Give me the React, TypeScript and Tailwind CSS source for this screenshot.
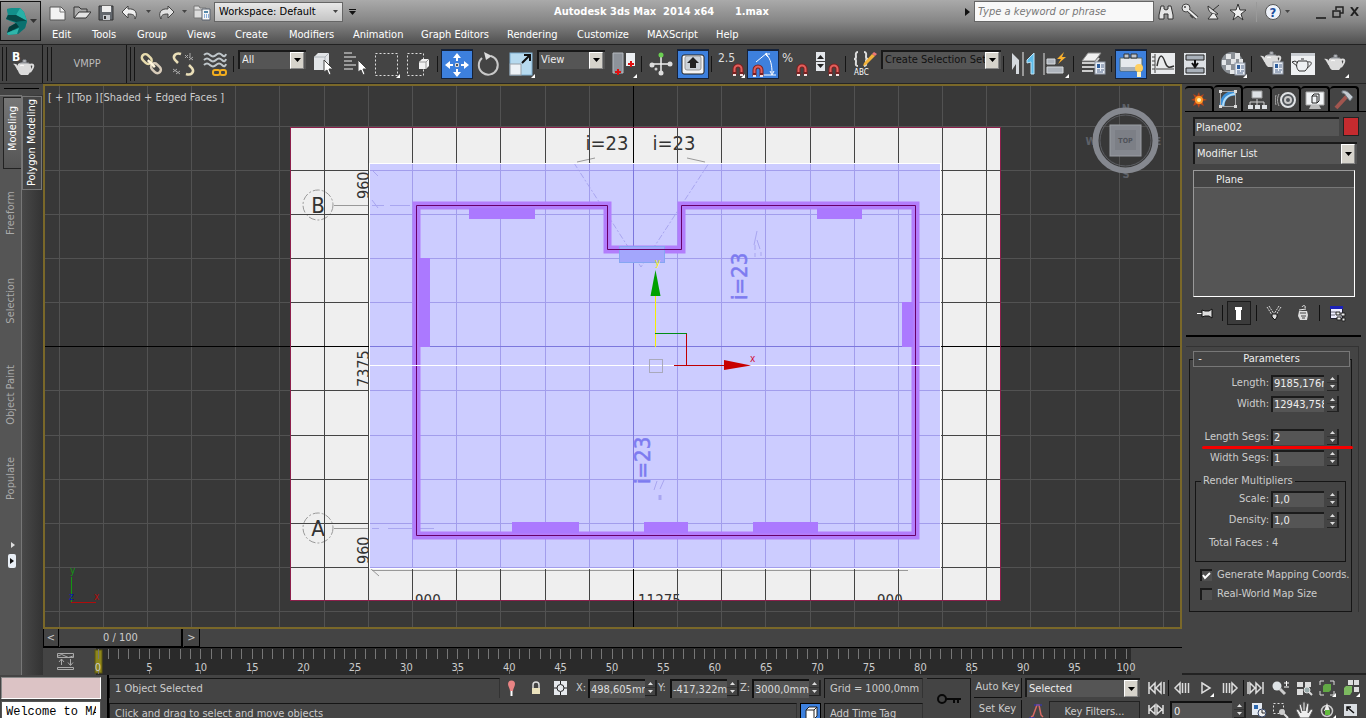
import { useState, type ReactNode } from "react";
import clsx from "clsx";

interface ChildrenProps {
  children?: ReactNode;
}

// ---------- shared bits ----------

const Icon = ({ size = 30, children }: ChildrenProps & { size?: number }) => (
  <svg width={size} height={size} viewBox={`0 0 ${size} ${size}`} fill="none" aria-hidden="true" className="shrink-0">
    {children}
  </svg>
);

const Flyout = () => <path d="M29 25v4h-4z" fill="#fff" />;

const Magnet = ({ x, y }: { x: number; y: number }) => (
  <g transform={`translate(${x} ${y})`}>
    <path d="M1.500 11V5a3.500 3.500 0 0 1 7 0v6" stroke="#7d2020" strokeWidth="4" />
    <path d="M1.500 8V5a3.500 3.500 0 0 1 7 0v3" stroke="#e2605c" strokeWidth="2" />
    <path d="M0 11h3M7 11h3" stroke="#f4e4e4" strokeWidth="2" />
  </g>
);

const Teapot = ({ x = 0, y = 0, color = "#dcdcdc" }: { x?: number; y?: number; color?: string }) => (
  <g transform={`translate(${x} ${y})`}>
    <path d="M5 5c3-2 9-2 12 0 2 4 1 8-2 11H8C5 14 4 10 5 5z" fill={color} />
    <path d="M6 12C3 11 3 6 0 5c2-1 4 0 6 3" fill={color} />
    <path d="M16 6c5-2 6 1 1 7" stroke={color} strokeWidth="2" />
    <path d="M10 1h3v2h-3zM7 4h9" fill={color} stroke="#8b8f96" />
    <path d="M7 7c1-1 3-1 4 0" stroke="#fff" />
  </g>
);

const SheetBadge = ({ x, y }: { x: number; y: number }) => (
  <g transform={`translate(${x} ${y})`}>
    <rect width="10" height="12" fill="#e9eef5" stroke="#8f98a6" />
    <rect x="2" y="2" width="3" height="4" fill="#2f5f9e" />
    <path d="M6 3h3M6 5h3M2 8h3M6 8h3M2 10h6" stroke="#54688a" />
  </g>
);

interface DropDownProps {
  label: string;
  value: string;
  className?: string;
  light?: boolean;
}

const DropDown = ({ label, value, className, light }: DropDownProps) => (
  <span className={clsx("relative inline-block h-[19px] shrink-0 border-t-2 border-l-2 border-[#191919] bg-[#555]", className)}>
    <select
      aria-label={label}
      className={clsx("block h-full w-full appearance-none overflow-hidden bg-transparent pr-4 pl-0.5 text-clip outline-none", light ? "text-[#eee]" : "text-[#111]")}
    >
      <option>{value}</option>
    </select>
    <span className="pointer-events-none absolute inset-y-0 right-0.5 flex w-3.5 items-center justify-center border border-white border-r-[#888] border-b-[#888] bg-[#d6d3cb]">
      <svg width="7" height="4" viewBox="0 0 7 4"><path d="M0 0h7L3.500 4z" fill="#000" /></svg>
    </span>
  </span>
);

const Spinner = ({ name }: { name: string }) => (
  <span className="flex h-4 w-3 shrink-0 flex-col border-r-2 border-b border-[#222]">
    <button aria-label={`${name} up`} className="flex flex-1 items-center justify-center">
      <svg width="5" height="3"><path d="M0 3h5L2.500 0z" fill="#ddd" /></svg>
    </button>
    <button aria-label={`${name} down`} className="flex flex-1 items-center justify-center border-t border-[#333]">
      <svg width="5" height="3"><path d="M0 0h5L2.500 3z" fill="#ddd" /></svg>
    </button>
  </span>
);

// ---------- title bar ----------

const menus = [
  { name: "Edit", width: "w-[40px]" },
  { name: "Tools", width: "w-[45px]" },
  { name: "Group", width: "w-[50px]" },
  { name: "Views", width: "w-[48px]" },
  { name: "Create", width: "w-[54px]" },
  { name: "Modifiers", width: "w-[64px]" },
  { name: "Animation", width: "w-[68px]" },
  { name: "Graph Editors", width: "w-[86px]" },
  { name: "Rendering", width: "w-[70px]" },
  { name: "Customize", width: "w-[70px]" },
  { name: "MAXScript", width: "w-[69px]" },
  { name: "Help", width: "w-[40px]" },
];

const Caret = () => (
  <svg width="5" height="3" className="shrink-0"><path d="M0 0h5L2.500 3z" fill="#444" /></svg>
);

const TitleButton = ({ label, children }: ChildrenProps & { label: string }) => (
  <button aria-label={label} className="flex w-6 shrink-0 items-center justify-center">
    <Icon size={18}>{children}</Icon>
  </button>
);

const Header = () => (
  <header className="flex h-[44px] shrink-0 bg-linear-to-b from-[#aaa] via-[#858585] to-[#505050]">
    <button aria-label="Application menu" className="mt-px flex h-10 w-[41px] shrink-0 items-center gap-0.5 border border-[#111] bg-linear-to-b from-[#999] to-[#666] pl-1">
      <svg width="23" height="29" viewBox="0 0 23 29">
        <path d="M2 2l6-1h7l4 4 3 9-2 7-7 6-10 1-1-2 2-6 7-4-6-2-4-2 2-5z" fill="#0d8583" />
        <path d="M2 2l6-1h7l-4 7-8 0z" fill="#128f8b" />
        <path d="M15 1l4 4 3 9-11-6z" fill="#27b0a7" />
        <path d="M1 12l2-4h8l11 6-11 1z" fill="#064847" />
        <path d="M11 15l11-1-2 7-7 6-5-5z" fill="#0a706f" />
        <path d="M4 20l7-4 3 4-12 6z" fill="#043c3b" />
        <path d="M2 26l12-5-2 6-9 1z" fill="#2fb5aa" />
      </svg>
      <svg width="7" height="4"><path d="M0 0h7L3.500 4z" fill="#333" /></svg>
    </button>
    <div className="flex min-w-0 flex-1 flex-col">
      <div className="flex h-[23px] items-center">
        <div className="flex items-center pl-[5px]">
          <TitleButton label="New">
            <path d="M1 4h11l4 4v9H1z" fill="#f2f2f2" stroke="#555" />
            <path d="M11 4v5h5" stroke="#777" />
          </TitleButton>
          <TitleButton label="Open">
            <path d="M1 15V4h5l2 2h6v3" fill="#aaa" stroke="#333" />
            <path d="M1 15l5-6h12l-5 6z" fill="#e4e4e4" stroke="#333" />
          </TitleButton>
          <TitleButton label="Save">
            <path d="M2 3h14v14H2z" fill="#62676d" stroke="#333" />
            <path d="M5 3h9v6H5z" fill="#eee" />
            <path d="M6 12h7v5H6z" fill="#c5c9ce" />
            <path d="M7 13h2v3H7z" fill="#333" />
          </TitleButton>
          <TitleButton label="Undo">
            <path d="M1 9l6-6v3c8-1 10 5 7 10 0-4-2-5-7-5v4z" fill="#f0f0f0" stroke="#444" />
          </TitleButton>
          <span className="flex w-3 justify-center"><Caret /></span>
          <TitleButton label="Redo">
            <path d="M17 9l-6-6v3C3 5 1 11 4 16c0-4 2-5 7-5v4z" fill="#e2e2e2" stroke="#444" />
          </TitleButton>
          <span className="flex w-3 justify-center"><Caret /></span>
          <TitleButton label="Project folder">
            <path d="M1 3h5l1 2h6v10H1z" fill="#ddd" stroke="#777" />
            <path d="M1 7h11" stroke="#888" />
            <path d="M9 6h8v11H9z" fill="#f6f6f6" stroke="#59616c" />
            <path d="M11 8h4v2h-4z" fill="#58a" />
            <path d="M11 12h1M13 12h1M15 12h1M11 14h1M13 14h1M15 14h1" stroke="#236ac0" />
          </TitleButton>
        </div>
        <span className="relative h-5 w-[129px] shrink-0 border border-[#666] bg-linear-to-b from-[#e8e8e8] to-[#c4c4c4]">
          <select aria-label="Workspace" className="block h-full w-full appearance-none bg-transparent pl-1 text-black outline-none">
            <option>Workspace: Default</option>
          </select>
          <span className="pointer-events-none absolute inset-y-0 right-1 flex items-center"><Caret /></span>
        </span>
        <button aria-label="Customize quick access" className="ml-1 px-0.5">
          <svg width="7" height="6"><path d="M0 0h7v1H0zM0 2h7L3.500 6z" fill="#111" /></svg>
        </button>
        <h1 className="flex-1 text-center font-[DejaVu_Sans_Condensed,Liberation_Sans,sans-serif] text-[11px] font-bold whitespace-pre text-white">
          {"Autodesk 3ds Max  2014 x64      1.max"}
        </h1>
        <svg width="5" height="8" className="mr-1"><path d="M0 0l5 4-5 4z" fill="#111" /></svg>
        <input
          aria-label="Search"
          placeholder="Type a keyword or phrase"
          className="h-[21px] w-[180px] shrink-0 border border-[#666] bg-[#f8f8f8] pl-[3px] italic outline-none placeholder:text-[#777]"
        />
        <TitleButton label="Search">
          <path d="M4 3h3v3l2 1 2-1V3h3l2 9v4h-5v-5H7v5H2v-4z" fill="#e6e6e6" stroke="#333" />
        </TitleButton>
        <TitleButton label="Subscription">
          <circle cx="5" cy="5" r="4" fill="#e6e6e6" stroke="#444" />
          <path d="M8 8l8 7M12 12l-2 2" stroke="#444" strokeWidth="4" />
          <path d="M7 7l9 8" stroke="#eee" strokeWidth="2" />
          <circle cx="4" cy="4" r="1" fill="#444" />
        </TitleButton>
        <TitleButton label="Exchange">
          <path d="M3 3c0 6 4 9 10 8z" fill="#ddd" stroke="#333" />
          <path d="M8 7l6-5M7 11l-4 5h10l-3-5" fill="#eee" stroke="#333" />
        </TitleButton>
        <TitleButton label="Favorites">
          <path d="M9 1l2 6h6l-5 4 2 6-5-4-5 4 2-6-5-4h6z" fill="#eee" stroke="#333" />
        </TitleButton>
        <span className="mr-1 ml-1.5 h-5 w-px bg-[#999]" />
        <TitleButton label="Help">
          <circle cx="9" cy="9" r="7.500" fill="#eef2fa" stroke="#555" />
          <text x="9" y="14" textAnchor="middle" fontSize="13" fontWeight="bold" fill="#1d4e9c">?</text>
        </TitleButton>
        <Caret />
        <button aria-label="Minimize" className="mt-3 ml-[26px] h-0.5 w-2.5 bg-[#333]" />
        <button aria-label="Restore" className="ml-1.5">
          <svg width="12" height="12" fill="none"><path d="M4 4V1h7v6H8M1 5h7v6H1z" stroke="#222" strokeWidth="1.500" /></svg>
        </button>
        <button aria-label="Close" className="mr-[7px] ml-1.5">
          <svg width="9" height="9"><path d="M1 0l7 9M8 0L1 9" stroke="#222" strokeWidth="2" /></svg>
        </button>
      </div>
      <nav className="flex h-[21px] items-center pb-px pl-[11px] text-white">
        {menus.map((menu) => (
          <button key={menu.name} className={clsx("mt-1 shrink-0 text-left whitespace-nowrap", menu.width)}>{menu.name}</button>
        ))}
      </nav>
    </div>
  </header>
);

// ---------- main toolbar ----------

const Tool = ({ label, active, children }: ChildrenProps & { label: string; active?: boolean }) => (
  <button
    aria-label={label}
    className={clsx(
      "flex h-[30px] w-8 shrink-0 items-center justify-center",
      active && "border border-t-2 border-[#16233a] bg-[#3d80dd]"
    )}
  >
    <Icon>{children}</Icon>
  </button>
);

const Separator = () => <span className="mr-[3px] ml-0.5 h-4 w-px shrink-0 bg-[#151515]" />;

const Grip = () => <span className="h-[34px] w-[5px] shrink-0 border-x border-[#151515]" />;

const Cursor = ({ x, y }: { x: number; y: number }) => (
  <path transform={`translate(${x} ${y})`} d="M0 0v12l3-2 2 5 2-1-2-5h4z" fill="#fff" stroke="#444" strokeWidth="1" />
);

const Toolbar = () => (
  <div className="flex h-10 shrink-0 items-center overflow-hidden border-t border-b border-t-[#222] border-b-[#262626] bg-[#444]">
    <div className="flex h-full w-[43px] shrink-0 items-center border-r border-[#151515] pl-0.5">
      <Grip />
      <Tool label="Batch render">
        <text x="4" y="12" fontSize="12" fontWeight="bold" fill="#fff">B</text>
        <Teapot x={5} y={10} />
      </Tool>
    </div>
    <div className="flex h-full w-[84px] shrink-0 items-center border-r border-[#151515] pl-1">
      <Grip />
      <button className="flex-1 pr-1 text-center text-[#bbb]">VMPP</button>
    </div>
    <div className="flex h-full w-2 shrink-0 items-center justify-end"><Grip /></div>
    <Tool label="Select and link">
      <g transform="rotate(45 15 15)">
        <rect x="3" y="11" width="11" height="7" rx="3.500" stroke="#e8dcae" strokeWidth="2.500" />
        <rect x="16" y="11" width="11" height="7" rx="3.500" stroke="#d8ccba" strokeWidth="2.500" />
        <path d="M10 14.500h10" stroke="#fff6dc" strokeWidth="2.500" />
      </g>
    </Tool>
    <Tool label="Unlink selection">
      <path d="M13 5c-5-2-9 2-6 6l3 3M18 25c5 2 9-2 6-6l-3-3" stroke="#eadfb8" strokeWidth="2.500" />
      <path d="M17 6l3 3m0-3l-3 3M21 8l4 3m0-3l-4 3M22 4v4M5 20l4 3m0-3l-4 3M8 22l4 3m0-3l-4 3" stroke="#aaa" />
    </Tool>
    <Tool label="Bind to space warp">
      <path d="M4 6q3-3 6 0t6 0 6 0 4-1M4 11q3-3 6 0t6 0 6 0 4-1M4 16q3-3 6 0t6 0 6 0 4-1" stroke="#bfc6ca" strokeWidth="2" />
      <rect x="13" y="21" width="7" height="5" rx="2" stroke="#f3ae1e" strokeWidth="2" />
      <rect x="20" y="21" width="6" height="5" rx="2" stroke="#f3ae1e" strokeWidth="2" />
    </Tool>
    <Separator />
    <DropDown label="Selection filter" value="All" className="mb-[10px] ml-px w-[68px]" light />
    <Tool label="Select object">
      <path d="M7 8l4-4h11v13l-4 4H7z" fill="#e2e5e8" />
      <path d="M7 8h11v13M18 8l4-4" stroke="#aeb4ba" />
      <Cursor x={17} y={11} />
    </Tool>
    <Tool label="Select by name">
      <path d="M5 4h8M5 8h12M5 12h8M5 16h12M5 20h9" stroke="#eee" strokeWidth="1" />
      <Cursor x={19} y={11} />
    </Tool>
    <Tool label="Rectangular region">
      <rect x="4.500" y="4.500" width="22" height="22" stroke="#ddd" strokeDasharray="2 2" />
      <Flyout />
    </Tool>
    <Tool label="Window crossing">
      <rect x="4.500" y="4.500" width="16" height="22" stroke="#ddd" strokeDasharray="2 2" />
      <path d="M16 13l3-3h7v7l-3 3h-7z" fill="#f2f2f2" />
      <path d="M16 13h7v7M23 13l3-3" stroke="#999" />
    </Tool>
    <span className="w-px shrink-0" />
    <Separator />
    <Tool label="Select and move" active>
      <path d="M15 3l4 5h-8zM15 27l4-5h-8zM3 15l5-4v8zM27 15l-5-4v8zM14 8h2v3h-2zM14 19h2v3h-2zM8 14h3v2H8zM19 14h3v2h-3z" fill="#fff" />
      <path d="M13.500 13.500h3v3h-3z" fill="#555" stroke="#ddd" />
    </Tool>
    <Tool label="Select and rotate">
      <path d="M17 7a9.500 9.500 0 1 1-9 2" stroke="#c8c8c8" strokeWidth="2" />
      <path d="M10 3l8 4-6 4z" fill="#ddd" />
    </Tool>
    <Tool label="Select and scale">
      <rect x="4" y="4" width="22" height="22" fill="#b7daef" stroke="#7faed0" />
      <rect x="4" y="15" width="11" height="11" fill="#eef2f6" stroke="#98a0a8" />
      <path d="M16 14l7-7M18 6h6v6" stroke="#111" strokeWidth="2" />
      <Flyout />
    </Tool>
    <DropDown label="Reference coordinate system" value="View" className="mb-[10px] w-[68px]" light />
    <span className="w-0.5 shrink-0" />
    <Tool label="Use pivot point center">
      <path d="M5 4h10v20H5z" fill="#8d9299" stroke="#b5bac0" />
      <path d="M18 4h9v13h-9z" fill="#eceff2" />
      <path d="M7 23h6M10 20v6M20 15h6M23 12v6" stroke="#e01010" strokeWidth="2" />
      <Flyout />
    </Tool>
    <Separator />
    <Tool label="Select and manipulate">
      <path d="M15 5v20M5 15h20" stroke="#eee" strokeWidth="1.500" />
      <circle cx="15" cy="6" r="2.500" fill="#6bcf52" /><circle cx="15" cy="24" r="2.500" fill="#ddd" />
      <circle cx="6" cy="16" r="2.500" fill="#ddd" /><circle cx="24" cy="15" r="2.500" fill="#ddd" />
      <circle cx="10" cy="20" r="1.500" fill="#ccc" />
    </Tool>
    <Tool label="Keyboard shortcut override" active>
      <rect x="4" y="5" width="22" height="19" rx="2" fill="#f4f4f4" stroke="#222" />
      <rect x="7" y="6" width="16" height="14" rx="2" fill="#ccd2d8" stroke="#999" />
      <path d="M15 7l6 6h-3v5h-6v-5H9z" fill="#222" />
    </Tool>
    <Separator />
    <Tool label="Snaps toggle">
      <text x="2" y="13" fontSize="12" fill="#ddd">2.5</text>
      <Magnet x={17} y={15} />
      <Flyout />
    </Tool>
    <Tool label="Angle snap" active>
      <path d="M8 12L19 3M13 25h15M18 4c5 5 6 12 6 19M22 21l2 4 2-4M20 7l-3-3 5 0" stroke="#fff" />
      <Magnet x={5} y={15} />
    </Tool>
    <Tool label="Percent snap">
      <text x="2" y="13" fontSize="13" fill="#ddd">%</text>
      <Magnet x={17} y={15} />
    </Tool>
    <Tool label="Spinner snap">
      <path d="M4 3h9v9H4zM4 13h9v9H4z" fill="#e5e8ec" />
      <path d="M5 10h7l-3.500-4zM5 15h7l-3.500 4z" fill="#222" />
      <Magnet x={17} y={15} />
    </Tool>
    <Separator />
    <Tool label="Edit named selection sets">
      <path d="M8 3c-3 0-2 3-2 5 0 1-1 2-2 2 1 0 2 1 2 2 0 3-1 5 2 5M14 3c3 0 2 3 2 5 0 1 1 2 2 2-1 0-2 1-2 2 0 3 1 5-2 5" stroke="#ddd" strokeWidth="2" />
      <path d="M14 14l8-9 3 2-9 9-3 1z" fill="#f2b23a" /><path d="M22 5l2-2 3 2-2 2z" fill="#e77" />
      <text x="4" y="26" fontSize="8" fill="#fff">ABC</text>
    </Tool>
    <DropDown label="Named selection sets" value="Create Selection Set" className="mb-[10px] w-[120px]" />
    <Separator />
    <Tool label="Mirror">
      <path d="M4 4l7 7v14H8V15l-4 6z" fill="#d5d9de" /><path d="M15 3v24" stroke="#eee" />
      <path d="M26 4l-7 7v3l4-1v12h3z" fill="#5cbbe9" stroke="#bfe4f7" />
    </Tool>
    <Tool label="Align">
      <path d="M4 4v22" stroke="#ddd" />
      <path d="M7 10h8v5H7zM7 18h16v6H7z" fill="#aeb4bc" stroke="#d6dade" />
      <path d="M24 3l-7 7h4l-3 5 8-7h-4z" fill="#fbb12d" />
      <Flyout />
    </Tool>
    <Separator />
    <Tool label="Layer manager">
      <path d="M4 12l6-8h13l-6 8z" fill="#f0f0f0" stroke="#888" />
      <path d="M4 14h13l4-5M4 18h13l2-3M4 22h11" stroke="#ccc" strokeWidth="2" />
      <SheetBadge x={17} y={13} />
    </Tool>
    <Separator />
    <Tool label="Graphite modeling tools" active>
      <path d="M4 8h22v13H4z" fill="#e6e9ed" stroke="#566" /><path d="M8 4h5v4H8zM15 4h6v4h-6z" fill="#bfc6ce" stroke="#333" />
      <path d="M5 17h20v4H5z" fill="#a8afb8" />
      <circle cx="23" cy="18" r="4" fill="#ffcf61" /><path d="M21 22h4v5h-4z" fill="#fff3c0" />
    </Tool>
    <Tool label="Curve editor">
      <path d="M3 4h24v21H3z" fill="#e9ebed" />
      <path d="M7 5v19M4 8h3M4 12h3M4 16h3M4 20h3M8 20h18" stroke="#444" />
      <path d="M9 17c3-15 6-10 8-4s4 6 9 4" stroke="#333" strokeWidth="1.500" />
    </Tool>
    <Tool label="Schematic view">
      <path d="M4 4h22v22H4z" fill="#dde1e5" /><path d="M6 6h18v5H6zM6 19h18v5H6z" fill="#a9b1ba" stroke="#222" />
      <path d="M15 11v6M12 14l3 4 3-4" stroke="#111" strokeWidth="2" />
    </Tool>
    <Separator />
    <Tool label="Material editor">
      <circle cx="14" cy="14" r="11" fill="#8b9096" />
      <path d="M8 5h5v5H8zM17 4h5v6h-5zM4 11h4v5H4zM13 10h5v5h-5zM21 10h4v5h-4zM8 16h5v5H8zM17 16h4v5h-4zM12 21h5v4h-5z" fill="#e4e6e8" />
      <SheetBadge x={17} y={14} />
      <Flyout />
    </Tool>
    <Separator />
    <Tool label="Render setup">
      <Teapot x={4} y={2} /><SheetBadge x={17} y={13} />
    </Tool>
    <Tool label="Rendered frame window">
      <path d="M3 4h24v22H3z" fill="#eef0f2" /><path d="M3 4h24v3H3z" fill="#c9cdd2" />
      <g stroke="#333"><path d="M10 12h9c2 4 1 7-2 10h-6c-3-3-3-7-1-10zM9 17l-5-4 3-1 3 2M20 13c5-1 4 3-1 6M13 10h3" /></g>
    </Tool>
    <Tool label="Render production">
      <Teapot x={4} y={5} /><Flyout />
    </Tool>
  </div>
);

// ---------- ribbon ----------

const ribbonTabs = [
  { name: "Freeform", height: "h-[88px]" },
  { name: "Selection", height: "h-[87px]" },
  { name: "Object Paint", height: "h-[102px]" },
  { name: "Populate", height: "h-[64px]" },
];

const Ribbon = () => (
  <aside className="flex w-[43px] shrink-0 flex-col bg-[#444]">
    <div className="h-[11px] shrink-0 px-1 pt-1"><div className="h-px bg-black" /></div>
    <div className="flex min-h-0 flex-1">
      <div className="flex w-[22px] shrink-0 flex-col overflow-hidden border-t border-r border-[#777] bg-[#555]">
        <button className="mt-px ml-[3px] flex h-[72px] shrink-0 items-start justify-center border border-r-0 border-[#222] bg-linear-to-b from-[#777] to-[#555] pt-2 text-white">
          <span className="rotate-180 [writing-mode:vertical-rl]">Modeling</span>
        </button>
        {ribbonTabs.map((tab) => (
          <button key={tab.name} className={clsx("flex shrink-0 items-center justify-center text-[#aaa]", tab.height)}>
            <span className="rotate-180 whitespace-nowrap [writing-mode:vertical-rl]">{tab.name}</span>
          </button>
        ))}
        <button aria-label="Expand ribbon" className="mt-8 ml-2 flex flex-col gap-1.5">
          <svg width="8" height="6"><path d="M3 0l4 3-4 3z" fill="#ddd" /></svg>
          <svg width="8" height="14"><rect width="8" height="14" rx="2" fill="#e8eef5" /><path d="M2 4l4 3-4 3z" fill="#111" /></svg>
        </button>
      </div>
      <div className="flex-1 bg-linear-to-r from-[#484848] to-[#333]">
        <button className="mt-px flex h-[94px] w-5 items-center justify-center border border-[#777] bg-[#444] text-white">
          <span className="rotate-180 whitespace-nowrap [writing-mode:vertical-rl]">Polygon Modeling</span>
        </button>
      </div>
    </div>
  </aside>
);

// ---------- viewport ----------

const gridX = [59, 103, 147, 191, 235, 279, 324, 368, 412, 456, 500, 545, 589, 677, 721, 765, 810, 854, 898, 942, 986, 1030, 1075, 1119, 1163];
const gridY = [126, 170, 214, 258, 302, 390, 435, 479, 523, 567, 611];
const axisX = 633;
const axisY = 346;

const GridLines = ({ color, axis }: { color: string; axis: string }) => (
  <g shapeRendering="crispEdges">
    {gridX.map((x) => <rect key={x} x={x} y="80" width="1" height="560" fill={color} />)}
    {gridY.map((y) => <rect key={y} x="40" y={y} width="1150" height="1" fill={color} />)}
    <rect x={axisX} y="80" width="1" height="560" fill={axis} />
    <rect x="40" y={axisY} width="1150" height="1" fill={axis} />
  </g>
);

const wall = "M416.500 205.500H607.500V249.500H681.500V205.500H915.500V535.500H416.500Z";

const openings = [
  [469, 208, 66, 11],
  [817, 208, 45, 11],
  [419, 258, 11, 89],
  [902, 302, 11, 45],
  [512, 522, 67, 11],
  [644, 522, 44, 11],
  [753, 522, 65, 11],
];

const Scene = () => (
  <svg viewBox="45 86 1135 541" preserveAspectRatio="xMidYMid slice" className="h-full w-full" fill="none" role="img" aria-label="Top view of the floor plan">
    <defs>
      <clipPath id="sheet"><rect x="290" y="127" width="711" height="474" /></clipPath>
      <clipPath id="plane"><rect x="370" y="163" width="571" height="405" /></clipPath>
    </defs>
    <GridLines color="#525252" axis="#000" />

    {/* scanned drawing */}
    <g clipPath="url(#sheet)">
      <rect x="290" y="127" width="711" height="474" fill="#efefef" />
      <g stroke="#999">
        <circle cx="318" cy="205" r="15" strokeDasharray="7 2 2 2" />
        <circle cx="318" cy="528" r="15" strokeDasharray="7 2 2 2" />
        <path d="M334 205.500h36M334 528.500h36M372 570.500h536M370 568l9 8M577 162l18-4M590 163l8 4M705 162l-18-4" />
      </g>
      <g fill="#333" className="font-[DejaVu_Sans_Condensed,Liberation_Sans,sans-serif]">
        <text x="318" y="213" fontSize="22" textAnchor="middle">B</text>
        <text x="318" y="536" fontSize="22" textAnchor="middle">A</text>
        <text x="607" y="150" fontSize="20" textAnchor="middle">i=23</text>
        <text x="674" y="150" fontSize="20" textAnchor="middle">i=23</text>
        <text transform="translate(369 199) rotate(-90)" fontSize="16">960</text>
        <text transform="translate(369 387) rotate(-90)" fontSize="16">7375</text>
        <text transform="translate(369 564) rotate(-90)" fontSize="16">960</text>
        <text x="415" y="606" fontSize="15">900</text>
        <text x="638" y="606" fontSize="15">11275</text>
        <text x="877" y="606" fontSize="15">900</text>
      </g>
      <GridLines color="#444" axis="#000" />
    </g>
    <rect x="290.500" y="127.500" width="710" height="473" stroke="#8c1f4b" />

    {/* selected plane */}
    <g clipPath="url(#plane)">
      <rect x="370" y="163" width="571" height="405" fill="#ccccff" />
      <g stroke="#a9a6f0">
        <path d="M574 163L641 267L709 163" strokeDasharray="6 2 2 2" />
        <path d="M372 205.500h12M390 205.500h20M372 528.500h7M388 528.500h46M372 170l6 6M372 200l6 8" />
        <path d="M757 231l-3 14M757 240l3 9M657 481l-3 9M664 480l-4 9M755 245v5M755 253v4M761 252v4" />
        <path d="M660 495v5" strokeWidth="3" />
      </g>
      <GridLines color="#a29dec" axis="#7c77dd" />
      <g fill="#7d7bf0" className="font-[DejaVu_Sans_Condensed,Liberation_Sans,sans-serif]" fontSize="22" stroke="#7d7bf0" strokeWidth="0.5">
        <text transform="translate(747 300) rotate(-90)">i=23</text>
        <text transform="translate(650 484) rotate(-90)">i=23</text>
      </g>
    </g>
    <rect x="369.500" y="163.500" width="571" height="405" stroke="#fff" />

    <path d={wall} stroke="#b27dfc" strokeWidth="8" />
    {openings.map(([x, y, w, h]) => (
      <rect key={`${x}-${y}`} x={x} y={y} width={w} height={h} fill="#ab79ff" />
    ))}
    <rect x="619.500" y="246.500" width="45" height="16" fill="#a3a6fc" stroke="#86a6f2" />
    <path d={wall} stroke="#670068" />
    <path d="M370 365.500h571" stroke="#fff" />

    {/* move gizmo */}
    <g shapeRendering="crispEdges">
      <rect x="655" y="296" width="1" height="51" fill="#f6f000" />
      <rect x="655" y="333" width="32" height="1" fill="#008c14" />
      <rect x="686" y="334" width="1" height="31" fill="#c00000" />
      <rect x="674" y="365" width="50" height="1" fill="#c00000" />
    </g>
    <path d="M655.500 270l5 26h-10z" fill="#00a000" />
    <path d="M724 360l27 5.500L724 370z" fill="#c80000" />
    <rect x="649.500" y="359.500" width="13" height="13" stroke="#a9a9bb" />
    <text x="750" y="362" fontSize="10" fill="#d0103a">x</text>
    <text x="655" y="266" fontSize="10" fill="#f6f000">y</text>

    {/* world axis */}
    <path d="M71.500 577v26" stroke="#139613" />
    <path d="M71 602.500h25" stroke="#b00c0c" />
    <text x="70" y="574" fontSize="10" fill="#139613">y</text>
    <text x="69" y="600" fontSize="10" fill="#0a10b0">z</text>
    <text x="94" y="600" fontSize="10" fill="#b00c0c">x</text>

    {/* view cube */}
    <g fill="#5e6168" fontSize="11" fontWeight="bold" textAnchor="middle">
      <text x="1126" y="112">N</text>
      <text x="1126" y="178">S</text>
      <text x="1091" y="145">W</text>
      <text x="1158" y="145">E</text>
    </g>
    <circle cx="1125.500" cy="140.500" r="30" stroke="#85888f" strokeWidth="6" />
    <circle cx="1125.500" cy="140.500" r="25.500" stroke="#5c5e63" />
    <rect x="1110" y="125" width="31" height="31" fill="#85888f" stroke="#9a9da3" />
    <rect x="1115" y="130" width="21" height="20" fill="#7c7f86" />
    <text x="1125.500" y="143" fontSize="7" fontWeight="bold" textAnchor="middle" fill="#50535a">TOP</text>
  </svg>
);

const Viewport = () => (
  <div className="relative min-h-0 flex-1 border-2 border-[#7a6829] bg-[#383838]">
    <Scene />
    <div className="absolute top-[5px] left-[3px] flex gap-px text-[#ccc]">
      <button>[ + ]</button>
      <button>[Top ]</button>
      <button>[Shaded + Edged Faces ]</button>
    </div>
  </div>
);

// ---------- time controls ----------

const TimeSlider = () => (
  <div className="flex h-[19px] shrink-0 border-b border-black bg-[#444] text-[#ccc]">
    <button className="w-4 border-r border-b border-l border-black">&lt;</button>
    <button className="mx-px w-[123px] border-r-2 border-b border-black">0 / 100</button>
    <button className="w-4 border-r border-b border-black">&gt;</button>
  </div>
);

const TrackBar = () => (
  <div className="flex h-[27px] shrink-0 bg-[#444]">
    <button aria-label="Open mini curve editor" className="flex w-[53px] items-center justify-center pr-2">
      <svg width="18" height="17" fill="none" stroke="#aaa">
        <path d="M.5.5h16v4H.5zM1 3q4-3 7 0t8 0M.5 14.500h16v2H.5zM4.500 6v6M2 9l2.500-3L7 9M13.500 6v6M11 9.500l2.500 3 2.500-3" />
      </svg>
    </button>
    <div className="flex flex-1 bg-[#2a2a2a] pr-[3px]">
      <svg height="27" className="mx-0.5 min-w-0 flex-1 overflow-visible">
        <rect x="-3" y="2" width="7" height="23" fill="#8d861a" stroke="#5a5510" />
        {Array.from({ length: 101 }, (_, frame) => (
          <line key={frame} x1={`${frame}%`} x2={`${frame}%`} y1="1" y2="11" stroke="#777" shapeRendering="crispEdges" />
        ))}
        {Array.from({ length: 21 }, (_, step) => (
          <g key={step}>
            <line x1={`${step * 5}%`} x2={`${step * 5}%`} y1="22" y2="26" stroke="#777" shapeRendering="crispEdges" />
            <text x={`${step * 5}%`} y="23" textAnchor="middle" fontSize="11" fill="#ccc">{step * 5}</text>
          </g>
        ))}
      </svg>
    </div>
    <div className="w-[51px] shrink-0" />
  </div>
);

// ---------- command panel ----------

const NumberField = ({ label, id, value }: { label: string; id: string; value: string }) => {
  const [text, setText] = useState(value);

  return (
    <div className="flex h-[21px] items-center justify-end pr-3">
      <label htmlFor={id} className="mr-0.5 whitespace-nowrap">{label}</label>
      <input
        id={id}
        value={text}
        onChange={(e) => setText(e.target.value)}
        className="h-4 w-[53px] border-t-2 border-l-2 border-[#1b1b1b] bg-[#555] pl-px text-[#eee] outline-none"
      />
      <span className="ml-[3px] flex"><Spinner name={label} /></span>
    </div>
  );
};

const CheckField = ({ label, initial }: { label: string; initial: boolean }) => {
  const [checked, setChecked] = useState(initial);

  return (
    <label className="flex h-[19px] items-center gap-[5px] whitespace-nowrap">
      <span className="relative flex">
        <input
          type="checkbox"
          checked={checked}
          onChange={() => setChecked(!checked)}
          className="h-3 w-3 appearance-none border-t-2 border-l-2 border-[#1b1b1b] bg-[#505050]"
        />
        {checked && (
          <svg width="9" height="8" className="pointer-events-none absolute top-[3px] left-[2px]" fill="none">
            <path d="M1 3l2 3 5-5" stroke="#fff" strokeWidth="2" />
          </svg>
        )}
      </span>
      {label}
    </label>
  );
};

const panelTabs = [
  {
    name: "Create",
    icon: (
      <>
        <path d="M11 3l1 4 4-2-2 4 5 2-5 1 2 5-4-2-1 4-2-4-4 2 2-5-4-1 4-2-2-4 4 2z" fill="#b8451b" />
        <circle cx="11" cy="11" r="4" fill="#ff9a28" /><circle cx="11" cy="11" r="2" fill="#fff2b0" />
      </>
    ),
  },
  {
    name: "Modify",
    icon: (
      <>
        <path d="M5 19C5 10 10 5 19 5" stroke="#3b8fd6" strokeWidth="5" /><path d="M6 19C6 11 11 6 19 6" stroke="#b3dcf6" strokeWidth="2" />
        <path d="M3.500 3.500h15v15h-15z" stroke="#aaa" /><path d="M2 2h3v3H2zM17 17h3v3h-3zM17 2h3v3h-3zM2 17h3v3H2z" fill="#ddd" />
      </>
    ),
  },
  {
    name: "Hierarchy",
    icon: (
      <>
        <path d="M6 2h10v7H6z" fill="#dfe2e5" stroke="#999" />
        <path d="M11 10v7M4 17v-4h14v4" stroke="#ccc" />
        <path d="M2 16h5v4H2zM9 16h5v4H9zM16 16h5v4h-5z" fill="#dfe2e5" />
      </>
    ),
  },
  {
    name: "Motion",
    icon: (
      <>
        <circle cx="13" cy="11" r="7" fill="#51565b" stroke="#e0e3e6" strokeWidth="2" />
        <circle cx="13" cy="11" r="3" stroke="#ccc" strokeWidth="2" />
        <path d="M4 5c-2 4-2 8 0 12M1 6c-1 3-1 7 0 10" stroke="#aaa" />
      </>
    ),
  },
  {
    name: "Display",
    icon: (
      <>
        <path d="M2 3h18v13H2z" fill="#f2f4f6" stroke="#aaa" /><path d="M7 16h8l2 4H5z" fill="#bbb" />
        <path d="M8 7l2-2h5v7l-2 2H8zM8 7h5v7" stroke="#222" />
      </>
    ),
  },
  {
    name: "Utilities",
    icon: (
      <>
        <path d="M3 19L14 7" stroke="#a1564f" strokeWidth="4" />
        <path d="M9 2c4-1 6 1 8 3l3 3-3 4-4-5c-1-2-2-3-4-3z" fill="#c5ccd2" stroke="#6d757c" />
      </>
    ),
  },
];

const StackButton = ({ label, active, children }: ChildrenProps & { label: string; active?: boolean }) => (
  <button aria-label={label} className={clsx("flex h-6 w-6 items-center justify-center", active && "border border-[#1b1b1b] bg-[#3b3b3b]")}>
    <Icon size={18}>{children}</Icon>
  </button>
);

const PanelBar = () => <span className="h-4 w-px bg-[#111]" />;

const CommandPanel = () => {
  const [tab, setTab] = useState("Modify");
  const [name, setName] = useState("Plane002");

  return (
    <aside className="flex w-[184px] shrink-0 flex-col overflow-hidden border-b-2 border-[#222] bg-[#444] text-[#ccc]">
      <div className="ml-[3px] flex h-7 shrink-0 items-end border-b border-black">
        {panelTabs.map((item) => (
          <button
            key={item.name}
            aria-label={item.name}
            onClick={() => setTab(item.name)}
            className={clsx(
              "flex w-[29px] items-center justify-center rounded-t-sm border-t-2 border-r-2 border-black",
              item.name === tab ? "h-[26px] bg-[#484848]" : "h-[25px]"
            )}
          >
            <Icon size={22}>{item.icon}</Icon>
          </button>
        ))}
      </div>
      <div className="flex flex-col pr-[7px] pl-[11px]">
        <div className="mt-[5px] flex items-center justify-between text-[#eee]">
          <input
            aria-label="Object name"
            value={name}
            onChange={(e) => setName(e.target.value)}
            className="h-[19px] w-[146px] border-t-2 border-l-2 border-[#1b1b1b] bg-[#555] pl-px outline-none"
          />
          <button aria-label="Object color" className="h-[19px] w-4 border border-[#222] bg-[#c52b2f]" />
        </div>
        <DropDown label="Modifier list" value="Modifier List" className="mt-[6px] h-[22px] w-[164px]" light />
        <div className="mt-1.5 h-[127px] w-[162px] border border-r-white border-b-white border-t-[#999] border-l-[#999] bg-[#555]">
          <button className="block h-[17px] w-full border-b border-[#777] bg-[#444] pt-px pl-[22px] text-left text-[#eee]">Plane</button>
        </div>
        <div className="mt-1 flex w-[156px] items-center justify-between">
          <StackButton label="Pin stack">
            <path d="M1 9.500h6" stroke="#fff" /><path d="M6 6l3 1h4l3-2v9l-3-2H9l-3 1z" fill="#ddd" stroke="#111" />
          </StackButton>
          <PanelBar />
          <StackButton label="Show end result" active>
            <path d="M5 3h7v3h-1v10H6V6H5z" fill="#fff" />
          </StackButton>
          <PanelBar />
          <StackButton label="Make unique">
            <path d="M2 3l5 8M16 3l-5 8M4 2l5 8M14 2L9 10" stroke="#ddd" strokeDasharray="2 1" /><path d="M7 10h5v3l-2 3-3-3z" fill="#ddd" stroke="#111" />
          </StackButton>
          <StackButton label="Remove modifier">
            <path d="M5 7h8l1 4-1 5H6l-2-4z" fill="#ddd" /><path d="M5 6l7-1M8 3c1-2 4-2 3 1" stroke="#eee" /><path d="M6 9h6M7 12h5M8 14h3" stroke="#444" />
          </StackButton>
          <PanelBar />
          <StackButton label="Configure modifier sets">
            <path d="M2.500 2.500h12v12h-12z" fill="#eef" stroke="#223" /><path d="M2 2h13v3H2z" fill="#1c22b8" /><path d="M3 8h5M3 11h4" stroke="#667" /><path d="M8 8h4v3H8zM13 9h4v3h-4zM9 13h4v3H9zM14 14h3v3h-3z" fill="#eee" stroke="#222" />
          </StackButton>
        </div>
      </div>
      <div className="mt-[10px] ml-1 h-0.5 w-[175px] shrink-0 bg-black" />
      <section className="mt-[9px] ml-1 w-[173px] border-t border-r border-[#333] pt-1 pr-1.5 pl-[3px]">
        <button className="relative z-10 mx-1 -mb-2 flex h-4 w-[157px] items-center border border-[#777] bg-[#444] text-[#eee]">
          <span className="w-2 pl-1">-</span>
          <span className="flex-1 pr-2 text-center">Parameters</span>
        </button>
        <div className="border border-[#151515] pt-3">
          <NumberField id="length" label="Length:" value="9185,176mm" />
          <NumberField id="width" label="Width:" value="12943,758mm" />
          <div className="h-3" />
          <div className="relative">
            <NumberField id="length-segs" label="Length Segs:" value="2" />
            <span className="pointer-events-none absolute -right-0.5 -bottom-0.5 left-3 h-[3px] rounded-full bg-[#f60000]" />
          </div>
          <NumberField id="width-segs" label="Width Segs:" value="1" />
          <fieldset className="mx-[5px] mt-1.5 h-[88px] border border-[#151515] pb-2">
            <legend className="ml-[5px] px-0.5">Render Multipliers</legend>
            <div className="-mr-1.5">
              <NumberField id="scale" label="Scale:" value="1,0" />
              <NumberField id="density" label="Density:" value="1,0" />
            </div>
            <p className="pt-1.5 pl-[13px]">Total Faces : 4</p>
          </fieldset>
          <div className="pt-[3px] pb-2 pl-[10px]">
            <CheckField label="Generate Mapping Coords." initial />
            <CheckField label="Real-World Map Size" initial={false} />
          </div>
        </div>
      </section>
    </aside>
  );
};

// ---------- status bar ----------

const Coordinate = ({ axis, value }: { axis: string; value: string }) => (
  <div className="flex items-center">
    <label htmlFor={`coord-${axis}`} className="w-3">{axis}:</label>
    <input id={`coord-${axis}`} defaultValue={value} className="h-[19px] w-[57px] border-t-2 border-l-2 border-[#111] bg-[#555] pl-px text-[#ddd] outline-none" />
    <Spinner name={axis} />
  </div>
);

const Mini = ({ label, children }: ChildrenProps & { label: string }) => (
  <button aria-label={label} className="flex h-5 w-6 shrink-0 items-center justify-center">
    <Icon size={18}>{children}</Icon>
  </button>
);

const field = "flex h-5 items-center border-t border-l border-t-[#151515] border-l-[#151515] border-r border-r-[#333] pl-[5px] whitespace-nowrap";

const StatusBar = () => (
  <footer className="flex h-[43px] shrink-0 overflow-hidden bg-[#444] text-[#ccc]">
    <div className="w-[101px] shrink-0 pt-0.5 pl-px">
      <div className="h-[22px] border border-[#888] border-r-white border-b-white bg-[#dcc3c5]" />
      <input
        aria-label="MAXScript listener"
        defaultValue="Welcome to MAXScript."
        className="mt-0.5 h-[22px] w-full border border-[#555] bg-white pr-1 pl-1 font-[Liberation_Mono,monospace] text-[12px] text-black outline-none"
      />
    </div>
    <div className="ml-1.5 flex min-w-0 flex-1 flex-col gap-[5px] border-l-2 border-black pt-[3px] pr-1">
      <div className="flex shrink-0 items-center">
        <div className={clsx(field, "flex-1")}>1 Object Selected</div>
        <Mini label="Tips">
          <path d="M5 5a3.500 3.500 0 0 1 7 0c0 2-2 5-2 7H7c0-2-2-5-2-7z" fill="#e98484" /><path d="M8.500 12v5" stroke="#fff" strokeWidth="2" />
        </Mini>
        <Mini label="Selection lock">
          <path d="M6 9V6a3 3 0 0 1 6 0v3" stroke="#ddd" strokeWidth="1.500" /><path d="M5 9h8v6H5z" fill="#ebe2bd" />
        </Mini>
        <Mini label="Absolute mode">
          <path d="M3 2h13v14H3z" fill="#e6e9ed" /><circle cx="9.500" cy="9" r="3.500" stroke="#222" /><path d="M9.500 2v3M9.500 13v3M3 9h3M13 9h3" stroke="#222" />
        </Mini>
        <div className="ml-1 flex gap-px">
          <Coordinate axis="X" value="498,605mm" />
          <Coordinate axis="Y" value="-417,322mm" />
          <Coordinate axis="Z" value="3000,0mm" />
        </div>
        <div className={clsx(field, "ml-[3px] w-[99px]")}>Grid = 1000,0mm</div>
      </div>
      <div className="flex shrink-0 items-center">
        <div className={clsx(field, "flex-1")}>Click and drag to select and move objects</div>
        <button aria-label="Adaptive degradation" className="mx-[3px] flex h-5 w-[21px] items-center justify-center border border-black bg-[#3d80dd]">
          <Icon size={18}><path d="M4 6l3-3h8v9l-3 3H4z" fill="#fff" stroke="#222" /><path d="M4 6h8v9M12 6l3-3" stroke="#222" /></Icon>
        </button>
        <button className={clsx(field, "w-[99px]")}>Add Time Tag</button>
      </div>
    </div>
    <button aria-label="Set keys" className="mt-[3px] flex w-11 shrink-0 items-center justify-center border-t border-r border-[#151515]">
      <svg width="24" height="12" fill="none" stroke="#080808"><circle cx="5" cy="6" r="4" strokeWidth="2" /><path d="M9 6h15M17 6v4M21 6v4" strokeWidth="2" /></svg>
    </button>
    <div className="ml-[3px] flex w-12 shrink-0 flex-col pt-[3px] text-center whitespace-nowrap">
      <button className="h-[21px] border-r border-b border-[#111]">Auto Key</button>
      <button className="mt-0.5 h-5 border-r border-[#111]">Set Key</button>
    </div>
    <div className="ml-[3px] flex w-[115px] shrink-0 flex-col gap-1 pt-[3px]">
      <DropDown label="Key selection set" value="Selected" className="w-full" light />
      <div className="flex">
        <Mini label="Default tangents">
          <path d="M3 15l2-1 4-11 2 0 2 10 2 2" stroke="#d86a63" strokeWidth="1.500" /><path d="M6 3h8M1 16h6" stroke="#33c" />
        </Mini>
        <button className="h-5 flex-1 border-t border-r border-l border-[#222]">Key Filters...</button>
      </div>
    </div>
    <div className="ml-1 flex w-[124px] shrink-0 flex-col gap-0.5 pt-[3px]">
      <div className="flex shrink-0 items-center justify-between">
        <Mini label="Go to start"><path d="M2 3v12M8 4L3 9l5 5zM14 4L9 9l5 5zM17 3v12" stroke="#ddd" strokeWidth="1.500" /></Mini>
        <PanelBar />
        <Mini label="Previous frame"><path d="M7 4L2 9l5 5zM9.500 4v10M12.500 4v10M15.500 4v10" stroke="#ddd" strokeWidth="1.500" /></Mini>
        <Mini label="Play"><path d="M5 4l8 5-8 5z" stroke="#ddd" strokeWidth="1.500" /><path d="M17 14v4h-4z" fill="#fff" /></Mini>
        <Mini label="Next frame"><path d="M11 4l5 5-5 5zM2.500 4v10M5.500 4v10M8.500 4v10" stroke="#ddd" strokeWidth="1.500" /></Mini>
        <PanelBar />
        <Mini label="Go to end"><path d="M1 3v12M3 4l5 5-5 5zM9 4l5 5-5 5zM16 3v12" stroke="#ddd" strokeWidth="1.500" /></Mini>
      </div>
      <div className="flex shrink-0 items-center">
        <Mini label="Key mode toggle"><path d="M2 4v9M16 4v9M8 4L3 8.500l5 4.500zM10 4l5 4.500-5 4.500z" stroke="#ddd" strokeWidth="1.500" /></Mini>
        <input aria-label="Current frame" defaultValue="0" className="ml-0.5 h-[19px] w-[62px] border-t-2 border-l-2 border-[#111] bg-[#555] pl-0.5 text-[#eee] outline-none" />
        <span className="ml-0.5 flex"><Spinner name="Frame" /></span>
        <Mini label="Time configuration"><path d="M3 2h10v12H3z" fill="#e4eaf2" /><path d="M5 4h4v4H5z" fill="#2c68b0" /><circle cx="13" cy="12" r="4" fill="#eee" stroke="#346" /><path d="M13 9v3h3" stroke="#222" /></Mini>
      </div>
    </div>
    <div className="grid w-[98px] shrink-0 grid-cols-4 content-start gap-y-0.5 pt-[3px] pr-1">
      <Mini label="Zoom"><circle cx="6" cy="7" r="4.500" fill="#dfe4e7" /><path d="M9 10l5 5" stroke="#ccc" strokeWidth="3" /><path d="M13 4h5M15.500 2v5M13 8h5" stroke="#fff" /></Mini>
      <Mini label="Zoom all"><path d="M2 3h6v5H2zM10 3h6v5h-6zM2 10h6v6H2z" fill="#ddd" /><circle cx="12" cy="11" r="3" fill="#9aa" stroke="#ddd" /><path d="M14 13l3 3" stroke="#ddd" strokeWidth="2" /></Mini>
      <Mini label="Zoom extents"><path d="M2 6V2h4M12 2h4v4M16 12v4h-4M6 16H2v-4" stroke="#ddd" /><path d="M5 7l2-2h6v6l-2 2H5z" fill="#62a945" /><path d="M18 14v4h-4z" fill="#fff" /></Mini>
      <Mini label="Zoom extents all"><path d="M6 1h5v5H6zM12 1h5v5h-5zM12 8h5v5h-5z" fill="#ddd" /><path d="M2 9l2-2h6v6l-2 3H2z" fill="#7dba60" /><path d="M18 14v4h-4z" fill="#fff" /></Mini>
      <Mini label="Zoom region"><path d="M2.500 2.500h10v10h-10z" stroke="#ddd" strokeDasharray="2 2" /><circle cx="11" cy="11" r="3" fill="#ccc" /><path d="M13 13l4 4" stroke="#ddd" strokeWidth="2" /></Mini>
      <Mini label="Pan"><path d="M5 17L1 9l2-1 3 4-2-8 2-1 2 7V1h2v9l2-8 2 1-1 9 3-4 2 1-4 8z" fill="#eee" stroke="#555" strokeWidth="1" /></Mini>
      <Mini label="Orbit"><circle cx="9" cy="10" r="5.500" stroke="#ccc" strokeWidth="1.500" /><path d="M9 2l3 8h-6z" fill="#eee" /><path d="M7 9h5v5H7z" fill="#62b93e" /><path d="M18 14v4h-4z" fill="#fff" /></Mini>
      <Mini label="Maximize viewport"><path d="M2 3h13v12H2z" fill="#d9dde1" /><path d="M5 10V6h4M5 6l7 6" stroke="#111" strokeWidth="1.500" /></Mini>
    </div>
  </footer>
);

const App = () => (
  <div className="flex h-screen w-full flex-col overflow-hidden bg-[#444] font-[DejaVu_Sans_Condensed,Liberation_Sans,sans-serif] text-[11px] leading-[14px]">
    <Header />
    <Toolbar />
    <main className="flex min-h-0 flex-1">
      <Ribbon />
      <div className="flex min-w-0 flex-1 flex-col">
        <Viewport />
        <TimeSlider />
        <TrackBar />
      </div>
      <CommandPanel />
    </main>
    <StatusBar />
  </div>
);

export default App;
